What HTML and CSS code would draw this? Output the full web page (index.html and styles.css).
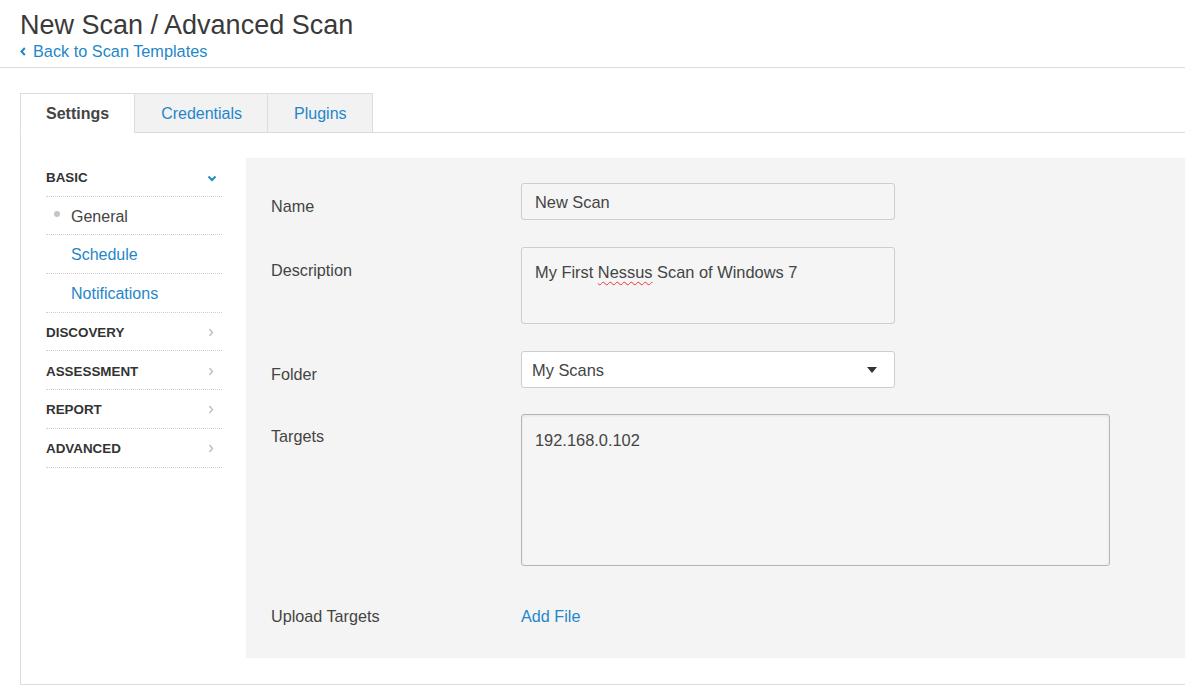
FILE: index.html
```html
<!DOCTYPE html>
<html lang="en">
<head>
<meta charset="utf-8">
<title>New Scan / Advanced Scan</title>
<link rel="stylesheet" href="styles.css">
</head>
<body>
<header class="page-header">
  <h1 class="page-title">New Scan / Advanced Scan</h1>
  <a class="back-link" href="#"><svg class="back-chev" width="6" height="9" viewBox="0 0 6 9"><path d="M4.8 1 L1.5 4.5 L4.8 8" fill="none" stroke="currentColor" stroke-width="2"/></svg>Back to Scan Templates</a>
</header>

<main class="editor">
  <nav class="tabs">
    <a class="tab active" href="#">Settings</a>
    <a class="tab" href="#">Credentials</a>
    <a class="tab" href="#">Plugins</a>
  </nav>
  <section class="tab-body">
    <aside class="side-nav">
      <div class="nav-row section">
        <span>BASIC</span>
        <svg class="chev-down" width="10" height="7" viewBox="0 0 10 7"><path d="M1.5 1.5 L5 5 L8.5 1.5" fill="none" stroke="currentColor" stroke-width="2"/></svg>
      </div>
      <div class="nav-row sub current"><span class="dot-col"><span class="dot"></span></span>General</div>
      <div class="nav-row sub link"><span class="dot-col"></span>Schedule</div>
      <div class="nav-row sub link"><span class="dot-col"></span>Notifications</div>
      <div class="nav-row section"><span>DISCOVERY</span><svg class="chev-right" width="6" height="9" viewBox="0 0 6 9"><path d="M1.5 1 L4.5 4.5 L1.5 8" fill="none" stroke="currentColor" stroke-width="1.3"/></svg></div>
      <div class="nav-row section"><span>ASSESSMENT</span><svg class="chev-right" width="6" height="9" viewBox="0 0 6 9"><path d="M1.5 1 L4.5 4.5 L1.5 8" fill="none" stroke="currentColor" stroke-width="1.3"/></svg></div>
      <div class="nav-row section"><span>REPORT</span><svg class="chev-right" width="6" height="9" viewBox="0 0 6 9"><path d="M1.5 1 L4.5 4.5 L1.5 8" fill="none" stroke="currentColor" stroke-width="1.3"/></svg></div>
      <div class="nav-row section"><span>ADVANCED</span><svg class="chev-right" width="6" height="9" viewBox="0 0 6 9"><path d="M1.5 1 L4.5 4.5 L1.5 8" fill="none" stroke="currentColor" stroke-width="1.3"/></svg></div>
    </aside>

    <div class="form-panel">
      <div class="form-row">
        <label class="form-label">Name</label>
        <div class="field text-input">New Scan</div>
      </div>
      <div class="form-row">
        <label class="form-label">Description</label>
        <div class="field textarea desc">My First <span class="misspelled">Nessus</span> Scan of Windows 7</div>
      </div>
      <div class="form-row">
        <label class="form-label">Folder</label>
        <div class="field select">
          <span>My Scans</span>
          <svg class="caret" width="10" height="6" viewBox="0 0 10 6"><path d="M0 0 H10 L5 6 Z" fill="#333"/></svg>
        </div>
      </div>
      <div class="form-row targets-row">
        <label class="form-label">Targets</label>
        <div class="field textarea targets">192.168.0.102</div>
      </div>
      <div class="form-row upload">
        <label class="form-label">Upload Targets</label>
        <a class="add-file" href="#">Add File</a>
      </div>
    </div>
  </section>
</main>
</body>
</html>
```

FILE: styles.css
```css
* { box-sizing: border-box; }

html, body {
  margin: 0;
  padding: 0;
  background: #ffffff;
}

body {
  font-family: "Liberation Sans", Arial, sans-serif;
  color: #444;
  overflow: hidden;
}

a { text-decoration: none; }

.page-header {
  padding: 9px 0 6px 20px;
  border-bottom: 1px solid #dcdcdc;
}

.page-title {
  margin: 0;
  font-size: 27px;
  line-height: 32px;
  font-weight: normal;
  color: #3a3a3a;
}

.back-link {
  display: flex;
  align-items: center;
  gap: 7px;
  font-size: 16.3px;
  line-height: 20px;
  color: #1f87c9;
}

.back-chev { margin-top: 1px; }

.editor {
  margin: 25px 0 0 20px;
}

.tabs {
  display: flex;
  border-bottom: 1px solid #dcdcdc;
  height: 40px;
}

.tab {
  display: block;
  height: 40px;
  padding: 0 25px 0 26px;
  line-height: 39px;
  font-size: 16px;
  color: #1f87c9;
  background: #f2f2f2;
  border: 1px solid #dcdcdc;
  margin-left: -1px;
}

.tab:first-child { margin-left: 0; }

.tab.active {
  background: #fff;
  color: #444;
  font-weight: bold;
  border-bottom-color: #fff;
  padding-left: 25px;
  padding-right: 25px;
}

.tab-body {
  display: flex;
  gap: 24px;
  border-left: 1px solid #dcdcdc;
  border-bottom: 1px solid #dcdcdc;
  padding: 25px 0 26px 25px;
}

.side-nav {
  width: 176px;
  flex: none;
}

.nav-row {
  display: flex;
  align-items: center;
  height: 38.7px;
  padding-top: 2px;
  border-bottom: 1px dotted #cfcfcf;
}

.nav-row.section {
  justify-content: space-between;
  font-size: 13.4px;
  font-weight: bold;
  color: #333;
  padding-right: 8px;
}

.chev-down { color: #1a8fbf; margin-right: -3px; margin-top: 1px; }
.chev-right { color: #bbb; }

.nav-row.sub {
  font-size: 16px;
}

.nav-row.current { color: #444; }
.nav-row.link { color: #1f87c9; }

.dot-col {
  width: 25px;
  flex: none;
  display: flex;
  padding-left: 8px;
}

.dot {
  width: 6px;
  height: 6px;
  border-radius: 50%;
  background: #c4c4c4;
  margin-top: -5px;
}

.form-panel {
  flex: 1;
  background: #f4f4f4;
  padding: 25px 0 32px 25px;
  display: flex;
  flex-direction: column;
  gap: 27px;
}

.form-row {
  display: flex;
  align-items: flex-start;
}

.form-row.targets-row {
  margin-top: -1px;
}

.form-label {
  width: 250px;
  flex: none;
  padding-top: 13px;
  font-size: 16.2px;
  line-height: 20px;
  color: #444;
}

.form-row.targets-row .form-label {
  padding-top: 12px;
}

.field {
  border: 1px solid #cdcdcd;
  border-radius: 3px;
  background: #f5f5f5;
  font-size: 16.4px;
  line-height: 20px;
  color: #444;
}

.text-input {
  width: 374px;
  height: 37px;
  padding: 8px 13px;
}

.textarea.desc {
  width: 374px;
  height: 77px;
  padding: 14px 13px;
}

.misspelled {
  text-decoration: underline wavy #e33;
  text-decoration-thickness: 1px;
  text-underline-offset: 3px;
}

.select {
  width: 374px;
  height: 37px;
  padding: 0 17px 0 10px;
  background: #fff;
  display: flex;
  align-items: center;
  justify-content: space-between;
}

.textarea.targets {
  width: 589px;
  height: 152px;
  padding: 15px 13px;
  border-color: #b5b5b5;
  box-shadow: inset 0 1px 3px rgba(0,0,0,0.08);
}

.add-file {
  padding-top: 13px;
  font-size: 16.2px;
  line-height: 20px;
  color: #1f87c9;
}
```
